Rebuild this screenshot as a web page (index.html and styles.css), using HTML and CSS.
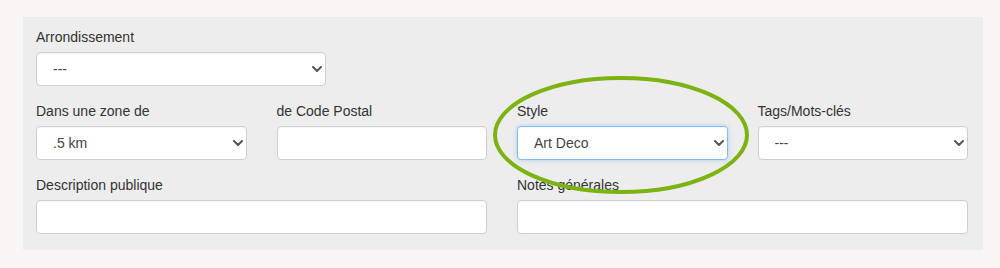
FILE: index.html
```html
<!DOCTYPE html>
<html lang="fr">
<head>
<meta charset="utf-8">
<title>Recherche</title>
<link rel="stylesheet" href="styles.css">
</head>
<body>
<form class="panel">
  <div class="row row-single">
    <div class="field field-arr">
      <label class="lbl">Arrondissement</label>
      <div class="select-wrap">
        <select class="ctl"><option>---</option></select>
        <svg class="chev" width="10" height="6" viewBox="0 0 10 6"><path d="M1 1 L5 5 L9 1" fill="none" stroke="#555" stroke-width="2" stroke-linecap="round" stroke-linejoin="round"/></svg>
      </div>
    </div>
  </div>
  <div class="row row-grid">
    <div class="field">
      <label class="lbl">Dans une zone de</label>
      <div class="select-wrap">
        <select class="ctl"><option>.5 km</option></select>
        <svg class="chev" width="10" height="6" viewBox="0 0 10 6"><path d="M1 1 L5 5 L9 1" fill="none" stroke="#555" stroke-width="2" stroke-linecap="round" stroke-linejoin="round"/></svg>
      </div>
    </div>
    <div class="field">
      <label class="lbl">de Code Postal</label>
      <input class="ctl" type="text">
    </div>
    <div class="field">
      <label class="lbl">Style</label>
      <div class="select-wrap">
        <select class="ctl focus"><option>Art Deco</option></select>
        <svg class="chev" width="10" height="6" viewBox="0 0 10 6"><path d="M1 1 L5 5 L9 1" fill="none" stroke="#555" stroke-width="2" stroke-linecap="round" stroke-linejoin="round"/></svg>
      </div>
    </div>
    <div class="field">
      <label class="lbl">Tags/Mots-clés</label>
      <div class="select-wrap">
        <select class="ctl"><option>---</option></select>
        <svg class="chev" width="10" height="6" viewBox="0 0 10 6"><path d="M1 1 L5 5 L9 1" fill="none" stroke="#555" stroke-width="2" stroke-linecap="round" stroke-linejoin="round"/></svg>
      </div>
    </div>
  </div>
  <div class="row row-grid">
    <div class="field span2">
      <label class="lbl">Description publique</label>
      <input class="ctl" type="text">
    </div>
    <div class="field span2">
      <label class="lbl">Notes générales</label>
      <input class="ctl" type="text">
    </div>
  </div>
  <svg class="highlight" width="260" height="122" viewBox="0 0 260 122">
    <ellipse cx="130" cy="61" rx="126" ry="57" fill="none" stroke="#7cb311" stroke-width="4"/>
  </svg>
</form>
</body>
</html>
```

FILE: styles.css
```css
* { box-sizing: border-box; }

html, body {
  margin: 0;
  padding: 0;
  background: #f9f5f4;
  font-family: "Liberation Sans", Arial, sans-serif;
  font-size: 14px;
  color: #333;
}

body {
  padding: 17px 17px 18px 23px;
}

.panel {
  position: relative;
  width: 960px;
  height: 233px;
  background: #ededed;
  padding: 10px 15px 0 13px;
  display: flex;
  flex-direction: column;
}

.row {
  margin-bottom: 15px;
}

.row-grid {
  display: grid;
  grid-template-columns: repeat(4, 1fr);
  column-gap: 30px;
}

.field {
  display: flex;
  flex-direction: column;
}

.field-arr {
  width: 290px;
}

.span2 {
  grid-column: span 2;
}

.lbl {
  display: block;
  line-height: 20px;
  height: 20px;
  margin-bottom: 5px;
  color: #333;
}

.select-wrap {
  position: relative;
}

.ctl {
  display: block;
  width: 100%;
  height: 34px;
  margin: 0;
  padding: 0 20px 0 16px;
  border: 1px solid #cfcfcf;
  border-radius: 4px;
  background: #fff;
  font-family: "Liberation Sans", Arial, sans-serif;
  font-size: 14px;
  color: #444;
  box-shadow: inset 0 1px 1px rgba(0, 0, 0, 0.04);
  -webkit-appearance: none;
  appearance: none;
  outline: none;
}

.ctl.focus {
  border-color: #86b9ee;
  box-shadow: 0 0 5px rgba(102, 165, 233, 0.45);
}

.chev {
  position: absolute;
  right: 4px;
  top: 14px;
  pointer-events: none;
}

.highlight {
  position: absolute;
  left: 468px;
  top: 57px;
  pointer-events: none;
}
```
